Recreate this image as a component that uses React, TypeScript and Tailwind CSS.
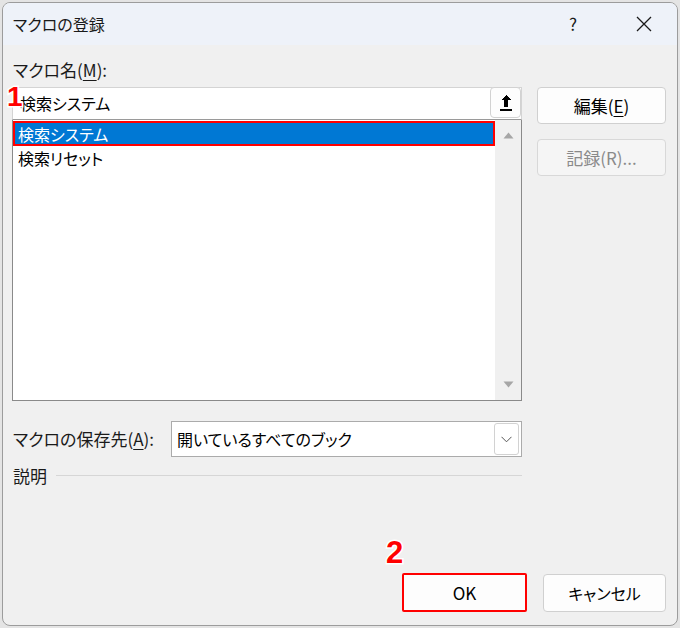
import React from "react";

const font = "font-['Noto_Sans_CJK_JP',sans-serif] [font-feature-settings:'palt']";

function UpArrowIcon() {
  return (
    <svg width="14" height="18" viewBox="0 0 14 18" shapeRendering="crispEdges">
      <path d="M7 1 L12 6 L9 6 L9 13 L5 13 L5 6 L2 6 Z" fill="#000" />
      <rect x="1" y="15" width="12" height="1.5" fill="#000" />
    </svg>
  );
}

export default function App() {
  return (
    <div className={`w-[680px] h-[628px] bg-[#e4e4e4] pt-[2px] px-[2px] pb-[2px] ${font} text-[#1a1a1a]`}>
      <div className="w-full h-full border border-[#9c9c9c] rounded-[8px] overflow-hidden flex flex-col bg-[#f0f0f0] relative">
        {/* Title bar */}
        <div className="h-[42px] bg-[#eef2f9] flex items-center pl-[10px] shrink-0">
          <span className="text-[16px] leading-[20px]">マクロの登録</span>
          <div className="ml-auto flex items-center">
            <span className="text-[17px] leading-[20px] w-[14px] text-center mr-[56px]">?</span>
            <svg width="16" height="16" viewBox="0 0 16 16" className="mr-[25px]">
              <path d="M1 1 L15 15 M15 1 L1 15" stroke="#1a1a1a" strokeWidth="1.3" />
            </svg>
          </div>
        </div>

        {/* Body */}
        <div className="flex-1 flex flex-col pl-[9px] pr-[11px] pt-[15px] pb-[13px]">
          <div className="text-[17px] leading-[20px] h-[20px] pl-[1px]">
            マクロ名(<span className="underline underline-offset-[3px]">M</span>):
          </div>

          <div className="flex gap-[15px] mt-[7px]">
            {/* Left column */}
            <div className="w-[510px] flex flex-col">
              <div className="h-[33px] bg-white border border-[#d4d4d4] border-b-[#9a9a9a] flex items-start">
                <span className="pl-[7px] text-[16px] leading-[30px] text-black">検索システム</span>
                <div className="ml-auto w-[31px] h-[31px] -mt-px rounded-[4px] border border-[#d2d2d2] bg-[#fdfdfd] flex items-center justify-center">
                  <UpArrowIcon />
                </div>
              </div>
              <div className="h-[281px] bg-white border border-[#8a8a8a] border-t-0 flex">
                <div className="flex-1 flex flex-col pt-[1px]">
                  <div className="h-[25px] bg-[#0078d4] border-2 border-[#ff0000] flex items-center pl-[3px]">
                    <span className="text-[16px] leading-[20px] text-white">検索システム</span>
                  </div>
                  <div className="h-[24px] flex items-center pl-[5px]">
                    <span className="text-[16px] leading-[20px] text-black">検索リセット</span>
                  </div>
                </div>
                <div className="w-[26px] bg-[#f0f0f0] flex flex-col items-center justify-between py-[12px]">
                  <svg width="11" height="7" viewBox="0 0 11 7">
                    <path d="M5.5 0.5 L10.5 6.5 L0.5 6.5 Z" fill="#a6a6a6" />
                  </svg>
                  <svg width="11" height="7" viewBox="0 0 11 7">
                    <path d="M0.5 0.5 L10.5 0.5 L5.5 6.5 Z" fill="#a6a6a6" />
                  </svg>
                </div>
              </div>
            </div>

            {/* Right column */}
            <div className="w-[129px] flex flex-col gap-[15px]">
              <div className="h-[37px] rounded-[4px] border border-[#d0d0d0] bg-[#fdfdfd] flex items-center justify-center">
                <span className="text-[17px] leading-[20px] text-black">
                  編集(<span className="underline underline-offset-[3px]">E</span>)
                </span>
              </div>
              <div className="h-[37px] rounded-[4px] border border-[#d8d8d8] bg-[#f5f5f5] flex items-center justify-center">
                <span className="text-[17px] leading-[20px] text-[#8a8a8a]">記録(R)...</span>
              </div>
            </div>
          </div>

          {/* Save location */}
          <div className="w-[510px] flex items-center mt-[20px]">
            <span className="text-[17px] leading-[20px] pl-[1px]">
              マクロの保存先(<span className="underline underline-offset-[3px]">A</span>):
            </span>
            <div className="ml-auto w-[351px] h-[36px] bg-white border border-[#ababab] flex items-center">
              <span className="pl-[5px] text-[16px] leading-[20px] text-black">開いているすべてのブック</span>
              <div className="ml-auto mr-[2px] w-[25px] h-[32px] rounded-[3px] border border-[#d2d2d2] bg-white flex items-center justify-center">
                <svg width="11" height="7" viewBox="0 0 11 7">
                  <path d="M0.5 0.8 L5.5 5.8 L10.5 0.8" stroke="#555" strokeWidth="1" fill="none" />
                </svg>
              </div>
            </div>
          </div>

          {/* Description */}
          <div className="w-[510px] flex items-center mt-[9px] h-[20px]">
            <span className="text-[17px] leading-[20px] pl-[1px]">説明</span>
            <div className="flex-1 ml-[9px] h-px bg-[#d6d6d6] -mt-[2px]" />
          </div>

          {/* Buttons */}
          <div className="mt-auto flex justify-end items-end gap-[16px]">
            <div className="w-[125px] h-[39px] rounded-[2px] border-2 border-[#ff0000] bg-[#fdfdfd] flex items-center justify-center">
              <span className="text-[17px] leading-[20px] text-black">OK</span>
            </div>
            <div className="w-[123px] h-[38px] rounded-[4px] border border-[#d0d0d0] bg-[#fdfdfd] flex items-center justify-center">
              <span className="text-[16px] leading-[20px] text-black">キャンセル</span>
            </div>
          </div>
        </div>

        {/* Annotations */}
        <span className="absolute left-[4px] top-[78px] font-['Liberation_Sans',sans-serif] font-bold text-[28px] leading-[32px] text-[#ff0000] [paint-order:stroke] [-webkit-text-stroke:3px_white]">
          1
        </span>
        <span className="absolute left-[383px] top-[533px] font-['Liberation_Sans',sans-serif] font-bold text-[31px] leading-[34px] text-[#ff0000] [paint-order:stroke] [-webkit-text-stroke:3px_white]">
          2
        </span>
      </div>
    </div>
  );
}
